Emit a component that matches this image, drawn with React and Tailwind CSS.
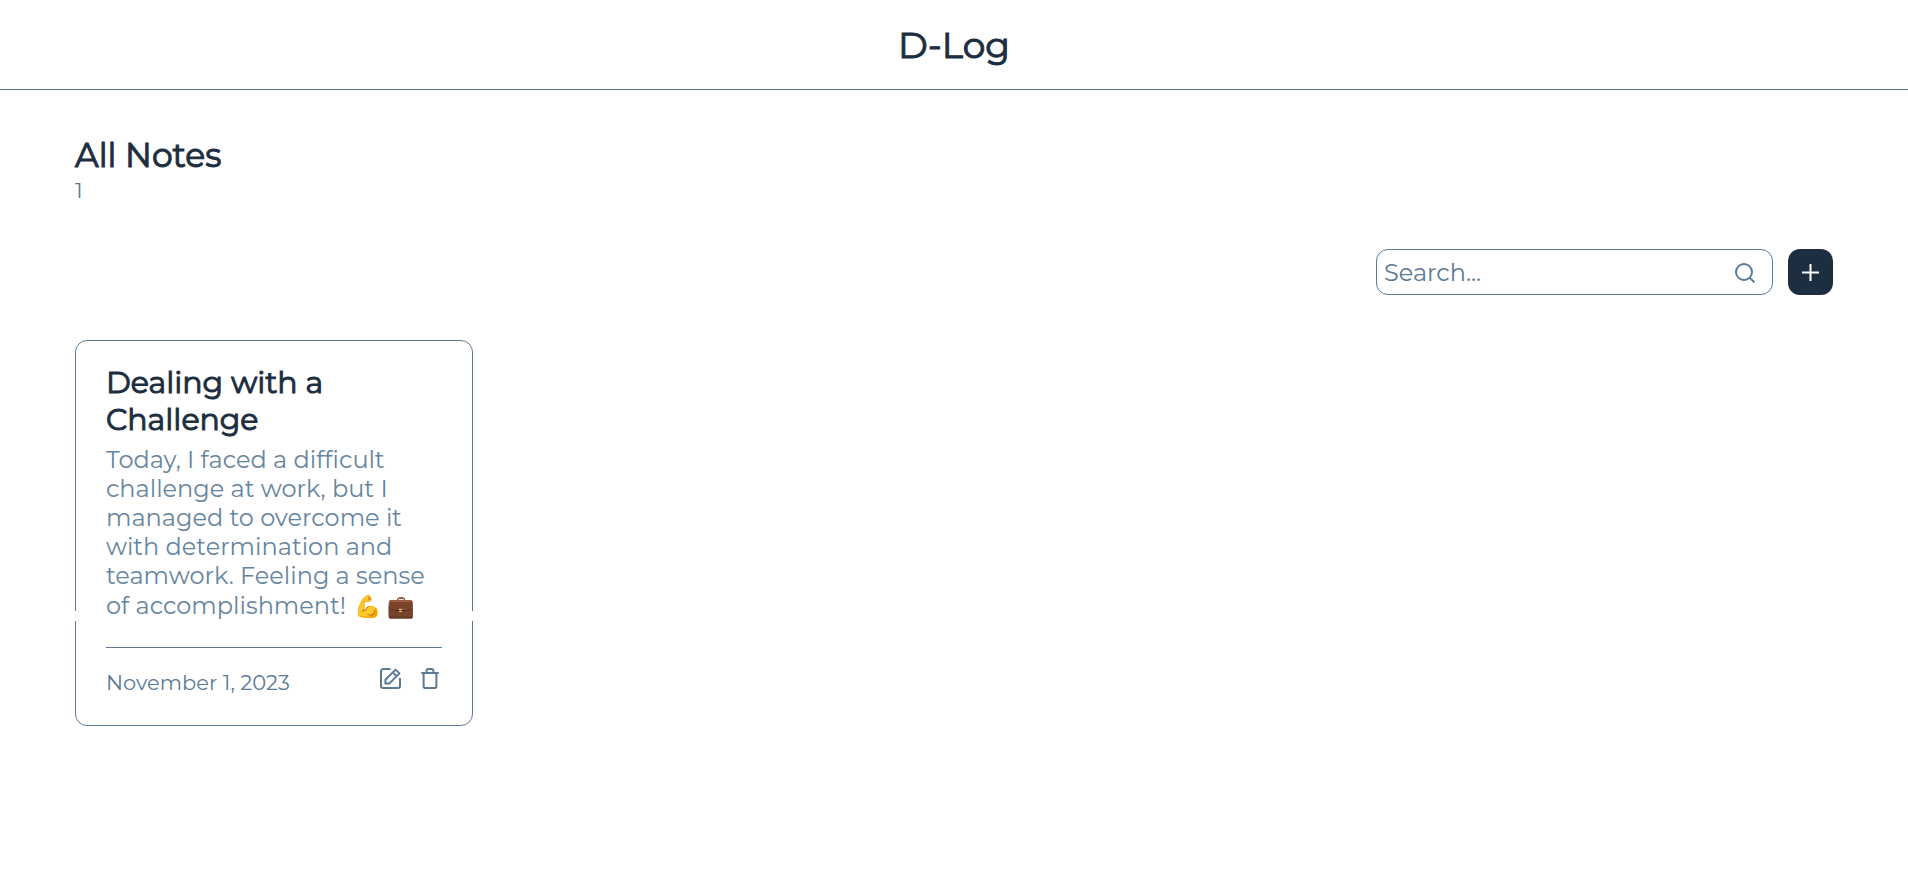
const font = "font-['Montserrat','Inter',sans-serif]";
const heading = "font-normal text-[#1c2e40] [-webkit-text-stroke:1px_currentColor]";

function SearchIcon() {
  return (
    <svg viewBox="0 0 20 20" className="mt-px size-5" fill="none" stroke="currentColor" strokeWidth="2" aria-hidden="true">
      <circle cx="9" cy="9" r="8" />
      <path d="M14.6 14.6L19.4 19.4" />
    </svg>
  );
}

function EditIcon() {
  return (
    <svg viewBox="0 0 21 21" className="size-[21px]" fill="none" stroke="currentColor" strokeWidth="2" strokeLinejoin="round" aria-hidden="true">
      <path d="M10.5 1.1H3a2 2 0 0 0-2 2v14.9a2 2 0 0 0 2 2h15a2 2 0 0 0 2-2V10" />
      <path d="M5.4 11.8L15.6 1.6L19.4 5.4L9.2 15.6H5.4Z" />
      <path d="M12.8 4.4L16.6 8.2" />
    </svg>
  );
}

function TrashIcon() {
  return (
    <svg viewBox="0 0 18 21" className="h-[21px] w-[18px]" fill="none" stroke="currentColor" strokeWidth="2" aria-hidden="true">
      <path d="M0.3 5H17.7" />
      <path d="M5.6 4.8V2.6a1.6 1.6 0 0 1 1.6-1.6h3.6a1.6 1.6 0 0 1 1.6 1.6V4.8" />
      <path d="M2.6 4.8V18.2a1.8 1.8 0 0 0 1.8 1.8h9.2a1.8 1.8 0 0 0 1.8-1.8V4.8" />
    </svg>
  );
}

function PlusIcon() {
  return (
    <svg viewBox="0 0 17 17" className="size-[17px]" fill="none" stroke="currentColor" strokeWidth="2" aria-hidden="true">
      <path d="M8.5 0V17M0 8.5H17" />
    </svg>
  );
}

const notes = [
  {
    title: "Dealing with a Challenge",
    body: "Today, I faced a difficult challenge at work, but I managed to overcome it with determination and teamwork. Feeling a sense of accomplishment!",
    emojis: ["💪", "💼"],
    date: "November 1, 2023",
  },
];

function NoteCard({ note }) {
  return (
    <article className="relative rounded-xl border border-[#5c7a95] px-[30px] pt-[23px] pb-[29px]">
      <span className="absolute -inset-x-px top-[270px] h-[10px] bg-white" />
      <div className="relative">
        <h3 className={`text-[30px] leading-[37px] ${heading}`}>{note.title}</h3>
        <p className="mt-[7px] text-[24px] leading-[29px] text-[#6685a0]">
          {note.body}{" "}
          <span className="ml-0.5 text-[22px] leading-[34px]">{note.emojis.join(" ")}</span>
        </p>
        <footer className="mt-[23px] flex items-start justify-between border-t border-[#5c7a95] pt-5 text-[#5c7a95]">
          <time dateTime="2023-11-01" className="mt-0.5 text-[21px] leading-[26px]">{note.date}</time>
          <div className="flex gap-5 pr-[3px]">
            <button type="button" aria-label="Edit note"><EditIcon /></button>
            <button type="button" aria-label="Delete note"><TrashIcon /></button>
          </div>
        </footer>
      </div>
    </article>
  );
}

export default function App() {
  return (
    <div className={`min-h-screen bg-white text-[#1c2e40] ${font}`}>
      <header className="flex h-[90px] items-center justify-center border-b border-[#5c7088]">
        <h1 className={`text-[36px] leading-[44px] ${heading}`}>D-Log</h1>
      </header>
      <main className="px-[75px] pt-11">
        <h2 className={`text-[33px] leading-[42px] ${heading}`}>All Notes</h2>
        <p className="mt-0.5 text-[21px] leading-[26px] text-[#5c7a95]">{notes.length}</p>
        <div className="mt-[45px] flex justify-end gap-[15px]">
          <label className="flex h-[46px] w-[397px] items-center rounded-xl border border-[#5c7a95] pr-[17px] pl-[7px] text-[#5c7a95]">
            <input
              type="text"
              aria-label="Search notes"
              placeholder="Search..."
              className="min-w-0 flex-1 bg-transparent text-[24px] leading-[29px] outline-none placeholder:text-[#5c7a95]"
            />
            <SearchIcon />
          </label>
          <button type="button" aria-label="Add note" className="flex h-[46px] w-[45px] items-center justify-center rounded-xl bg-[#1c2e40] text-white">
            <PlusIcon />
          </button>
        </div>
        <section className="mt-[45px] grid grid-cols-4 gap-[55px]">
          {notes.map((note) => (
            <NoteCard key={note.title} note={note} />
          ))}
        </section>
      </main>
    </div>
  );
}
